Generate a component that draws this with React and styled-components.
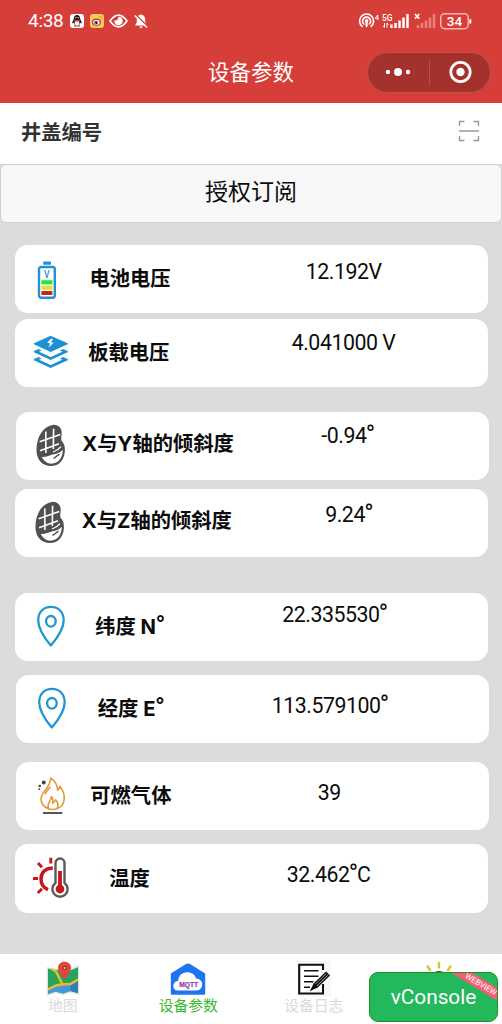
import React, { useState } from "react";
import styled, { createGlobalStyle } from "styled-components";

const GlobalStyle = createGlobalStyle`
  * {
    box-sizing: border-box;
  }

  body {
    margin: 0;
    background: #dcdcdc;
    font-family: Roboto, "Noto Sans CJK SC", sans-serif;
    color: #0c0c0c;
  }

  svg {
    display: block;
    flex: none;
  }
`;

const Page = styled.div`
  display: flex;
  flex-direction: column;
  width: 502px;
  height: 1024px;
  overflow: hidden;
  background: #dcdcdc;
`;

const Header = styled.header`
  flex: none;
  height: 102.5px;
  background: #d63e39;
  color: #fff;
`;

const StatusBar = styled.div`
  display: flex;
  align-items: center;
  justify-content: space-between;
  height: 42px;
  padding: 0 30px 0 28px;
`;

const StatusGroup = styled.div`
  display: flex;
  align-items: center;
  gap: 5.5px;
`;

const Time = styled.span`
  width: 36.5px;
  font-size: 19px;
  line-height: 22px;
  letter-spacing: -0.3px;
`;

const NavBar = styled.div`
  display: grid;
  grid-template-columns: 1fr 86px 1fr;
  align-items: center;
  height: 60px;
`;

const Title = styled.h1`
  grid-column: 2;
  margin: 0;
  padding-top: 2px;
  font-size: 21.5px;
  font-weight: 400;
  line-height: 30px;
  white-space: nowrap;
`;

const Capsule = styled.div`
  justify-self: end;
  display: flex;
  align-items: center;
  width: 124px;
  height: 41px;
  margin-right: 11px;
  border: 1px solid #c0514c;
  border-radius: 21px;
  background: #a5312d;
`;

const CapsuleButton = styled.button`
  display: flex;
  flex: 1;
  align-items: center;
  justify-content: center;
  height: 25px;
  padding: 0;
  border: 0;
  background: none;

  & + & {
    border-left: 1px solid #bd4e49;
  }
`;

const NumberRow = styled.div`
  display: flex;
  flex: none;
  align-items: center;
  justify-content: space-between;
  height: 61px;
  padding: 0 22.5px 5px 21px;
  background: #fff;
  color: #333;
  font-size: 20.3px;
  font-weight: 700;
`;

const SubscribeButton = styled.button`
  flex: none;
  height: 59px;
  padding: 0;
  border: 1px solid #cfcfcf;
  border-radius: 6px;
  background: #f8f8f8;
  color: #0c0c0c;
  font-family: inherit;
  font-size: 23px;
  line-height: 30px;
`;

const CardList = styled.main`
  display: flex;
  flex: 1;
  flex-direction: column;
  padding-top: 22px;
`;

const Card = styled.section`
  display: grid;
  grid-template-columns: 66px 160px 1fr;
  flex: none;
  width: 472.8px;
  height: ${(p) => p.$height || 68}px;
  margin: 0 0 ${(p) => p.$gap}px ${(p) => (p.$shifted ? 16.3 : 15.2)}px;
  border-radius: 13px;
  background: #fff;
`;

const CardIcon = styled.div`
  display: flex;
  align-items: center;
  padding-left: 15.8px;
`;

const CardLabel = styled.div`
  align-self: center;
  padding-left: ${(p) => p.$indent}px;
  padding-bottom: ${(p) => p.$lift || 0}px;
  font-family: Inter, "Noto Sans CJK SC", sans-serif;
  font-size: 20.3px;
  font-weight: 700;
  line-height: 28px;
  white-space: nowrap;
`;

const CardValue = styled.div`
  padding: ${(p) => p.$top}px 0 0 ${(p) => p.$indent}px;
  font-size: 21.3px;
  line-height: 24px;
  letter-spacing: -0.45px;
  white-space: nowrap;
`;

const Degree = styled.span`
  font-family: Roboto, sans-serif;
  font-size: ${(p) => (p.$bold ? 1.25 : 1.18)}em;
  font-weight: ${(p) => (p.$bold ? 700 : 400)};
  line-height: 0;
  margin-left: ${(p) => (p.$bold ? -0.5 : -0.8)}px;
  letter-spacing: -1px;
`;

const TabBar = styled.nav`
  display: grid;
  grid-template-columns: repeat(4, 1fr);
  flex: none;
  height: 70px;
  background: #fff;
`;

const Tab = styled.button`
  display: flex;
  flex-direction: column;
  align-items: center;
  padding: 6.5px 0 0;
  border: 0;
  background: none;
  color: ${(p) => (p.$active ? "#3cba2f" : "#dadada")};
  font-family: inherit;
  font-size: 14.8px;
  line-height: 20px;
`;

const DebugButton = styled.button`
  position: fixed;
  top: 972px;
  left: 369px;
  width: 129px;
  height: 50px;
  padding: 0;
  overflow: hidden;
  border: 1.5px solid #1b9226;
  border-radius: 9px;
  background: #23b85c;
  color: #fff;
  font-family: Roboto, sans-serif;
  font-size: 20.8px;
  line-height: 46px;
`;

const Ribbon = styled.span`
  position: absolute;
  top: 6px;
  left: 66px;
  width: 90px;
  height: 11px;
  background: #f45d77;
  font-size: 8px;
  line-height: 11px;
  text-align: center;
  transform: rotate(31deg);
`;

const QQIcon = () => (
  <svg width="14" height="14" viewBox="0 0 14 14">
    <rect width="14" height="14" rx="3" fill="#fff" />
    <path d="M7 1C4.7 1 3.7 2.8 3.8 5L2.2 8.6l.4 1 1.3-.8.9 2.6h4.4l.9-2.6 1.3.8.4-1L10.2 5C10.3 2.8 9.3 1 7 1Z" fill="#20191a" />
    <ellipse cx="7" cy="9" rx="2.4" ry="2.6" fill="#fff" />
    <circle cx="5.9" cy="3.6" r=".7" fill="#fff" />
    <circle cx="8.1" cy="3.6" r=".7" fill="#fff" />
    <path d="M4 5.6q3 1.4 6 0v1.3q-3 1.3-6 0Z" fill="#d73931" />
    <path d="M4.2 12.1h2.3M7.5 12.1h2.3" stroke="#c44428" strokeWidth="1.1" />
  </svg>
);

const WeiboIcon = () => (
  <svg width="14" height="14" viewBox="0 0 14 14">
    <rect width="14" height="14" rx="3" fill="#f5cb61" />
    <ellipse cx="6.4" cy="8.2" rx="4.5" ry="3.6" fill="#c93c2b" />
    <ellipse cx="6.4" cy="8.5" rx="3.2" ry="2.4" fill="#fff" />
    <circle cx="6" cy="8.7" r="1.7" fill="#201818" />
    <circle cx="5.5" cy="8.9" r=".5" fill="#fff" />
    <path d="M8.7 2.6c2.3-.3 3.5 1.4 2.9 3.3" fill="none" stroke="#f09a29" strokeWidth="1.2" />
  </svg>
);

const EyeIcon = () => (
  <svg width="19" height="14" viewBox="0 0 19 14">
    <path d="M1 7Q9.5-4.8 18 7 9.5 18.8 1 7Z" fill="none" stroke="#fff" strokeWidth="1.7" />
    <path d="M9.5 2.8A4.2 4.2 0 1 1 5.4 6.2Q8.8 7.4 9.5 2.8Z" fill="#fff" />
  </svg>
);

const MutedIcon = () => (
  <svg width="14" height="15" viewBox="0 0 14 15">
    <path d="M7 .6c-2.8.5-4.2 2.3-4.2 4.8v3.2L1 11.5h12l-1.8-2.9V5.4C11.2 2.9 9.8 1.1 7 .6ZM5 12.5h4L7 14.5Z" fill="#fff" />
    <path d="M2 1 13.8 12.7" stroke="#d63e39" strokeWidth="1.5" />
    <path d="M.7 1.5 13 13.5" stroke="#fff" strokeWidth="1.5" />
  </svg>
);

const SignalIcons = () => (
  <svg width="114" height="18" viewBox="0 0 114 18" fill="none">
    <g stroke="#fff" strokeWidth="1.6" strokeLinecap="round">
      <path d="M4.2 14.5a7 7 0 1 1 8.8 0" />
      <path d="M5.8 12a4 4 0 1 1 5.6 0" />
      <path d="M8.6 9v5" strokeWidth="2.2" />
    </g>
    <circle cx="8.6" cy="8.7" r="1.8" fill="#fff" />
    <g fill="#fff" fontFamily="Roboto" fontWeight="500">
      <text x="16.8" y="7.5" fontSize="7.5">4</text>
      <text x="24" y="8.5" fontSize="9" textLength="10.5" lengthAdjust="spacingAndGlyphs">5G</text>
    </g>
    <path d="M26.5 11v4.5l-1.4-1.5M29 15.5V11l1.4 1.5" stroke="#fff" />
    <path d="M33.5 12.5v3.5M37.5 11v5M41.5 8.5v7.5M45.5 5.5v10.5M49.5 2v14" stroke="#fff" strokeWidth="2.5" />
    <path d="m57 2 4.3 4.6m0-4.6-4.3 4.6" stroke="#fff" strokeWidth="1.7" />
    <path d="M60 13v3M64 11v5M68 8.5v7.5M72 5.5v10.5M76 2v14" stroke="#e8827e" strokeWidth="2.5" />
    <rect x="82.7" y="1.7" width="27.5" height="15" rx="4" stroke="#f4b6b3" strokeWidth="1.5" />
    <path d="M112.3 7.3v4.2" stroke="#fff" strokeWidth="2" />
    <text x="96.5" y="14" fill="#fff" fontFamily="Roboto" fontSize="13.5" fontWeight="500" textAnchor="middle">34</text>
  </svg>
);

const ScanIcon = () => (
  <svg width="22" height="22" viewBox="0 0 22 22" fill="none" stroke="#999" strokeWidth="1.4">
    <path d="M1.5 6V1.5h5M15.5 1.5h5V6M20.5 16v4.5h-5M6.5 20.5h-5V16M1 11h20" />
  </svg>
);

const BatteryIcon = () => (
  <svg width="40" height="44" viewBox="0 0 40 44">
    <rect x="12.2" y="4.5" width="7.8" height="3.2" rx=".6" fill="#2292d0" />
    <rect x="8" y="10" width="15.8" height="30.7" rx="2.2" fill="#fff" stroke="#2292d0" strokeWidth="2.4" />
    <text x="15.9" y="21.2" textAnchor="middle" fill="#2292d0" fontFamily="Roboto" fontWeight="500" fontSize="10" textLength="5.6" lengthAdjust="spacingAndGlyphs">V</text>
    <path d="M10.4 23.2h11v4.2h-11z" fill="#23e83b" />
    <path d="M10.4 28.7h11v4h-11z" fill="#e9da3b" />
    <path d="M10.4 34h11v4h-11z" fill="#cb2411" />
  </svg>
);

const LayersIcon = () => (
  <svg width="40" height="44" viewBox="0 0 40 44" fill="#1c91d3">
    <path d="M19.7 4.8 36.7 12.3v1L19.7 20.9 2.9 13.3v-1Z" />
    <path d="m20.5 7.6-4.3 4 2.9.9-1.7 4.2 5.2-5-3-.8 2.4-2.5Z" fill="#fff" />
    <path d="m2.9 20 4.6-2 3 1.4-2.4 1.3 11.6 5.2 11.6-5.2-2.4-1.3 3-1.4 4.8 2v1.2l-17 7.9-16.8-7.9Z" />
    <path d="m2.9 28 4.6-2 3 1.4-2.4 1.3 11.6 5.2 11.6-5.2-2.4-1.3 3-1.4 4.8 2v1.2l-17 7.9-16.8-7.9Z" />
  </svg>
);

const ManholeIcon = () => (
  <svg width="40" height="44" viewBox="0 0 40 44">
    <path d="M20.8.9c4.7-.6 8.6 2.7 8.9 7.1.1 3.9-.9 6.1-.2 8.7 2.5 2.3 3.5 5.5 3.4 9.5C32.7 36 27 42 19 42 10 42 4.5 35.5 4.5 26 4.5 13.5 10.5 2.5 20.8.9Z" fill="#505050" />
    <path d="M9.7 33c4.6.3 8-1.5 10.9-2.5l4.5-1.1c2.3-.5 4-1.9 5.6-3.6C31 33 26.6 39.7 19.5 39.7c-4.2 0-7.5-2.7-9.8-6.7Z" fill="#fff" />
    <path d="M13.8 7.5 13.9 29M21.6 4.8 21.3 25M7.6 17.7l20.7-7.2M8 26.8l19-7" stroke="#fff" strokeWidth="1.6" fill="none" />
    <path d="m21 29 6.3-4.2M21.5 34.5l6-4.3" stroke="#505050" strokeWidth="1.5" />
    <path d="M21 28q5-1.5 8-5.3" stroke="#fff" strokeWidth="1.3" fill="none" />
  </svg>
);

const PinIcon = () => (
  <svg width="40" height="44" viewBox="0 0 40 44" fill="none" stroke="#2196d0" strokeWidth="2.3">
    <path d="M19.8 40.5Q7.2 25.5 7.2 15.2C7.2 7.1 12.5 1.8 19.9 1.8s12.8 5.3 12.8 13.4Q32.7 25.5 19.8 40.5Z" strokeLinejoin="round" />
    <ellipse cx="19.9" cy="16.3" rx="4.8" ry="5.3" />
  </svg>
);

const FlameIcon = () => (
  <svg width="40" height="44" viewBox="0 0 40 44" fill="none">
    <g stroke="#e39a3b" strokeWidth="1.6" strokeLinejoin="round">
      <path d="M16.3 34.8c-4.6-1.9-7.5-5.5-7.2-10.5.4-6.9 8.7-9.3 9.7-20.2 4.1 2.9 7 7 6.7 12.3 1.6-.8 2.3-2.2 2.4-4.1 3.3 4.2 4.7 8.4 4.3 13-.4 4.7-3 7.9-7.3 9.5 2.1-3.3 1.1-6.3-1.2-9-1.3 2.5-3.1 3.6-3.2 3.4.8-2.7.5-5.2-1.1-6.7.2 4.6-5.2 6.3-3.1 12.3Z" />
      <path d="M13.1 20.5c.4-2.6 2.5-4.3 5.5-7.8" />
      <path d="M16.3 34.8q4.5 1.5 8.6 0" />
    </g>
    <circle cx="11.7" cy="8.6" r="2" fill="#444" />
    <circle cx="7.7" cy="12" r="1.3" fill="#444" />
    <circle cx="7.3" cy="15.2" r=".9" fill="#444" />
    <path d="M11 39h19.3" stroke="#555" strokeWidth="2" />
  </svg>
);

const TemperatureIcon = () => (
  <svg width="40" height="44" viewBox="0 0 40 44" fill="none">
    <path d="M21.8 11.2C14.5 10.6 10 15.8 10 22c0 5 2.4 8.7 7 10.6" stroke="#c4161c" strokeWidth="3.5" />
    <path d="M19.8 .8v5.8M7 6l4 4.3M2 21.5h5M6.8 36l4.2-4.3" stroke="#c4161c" strokeWidth="2.9" />
    <path d="M24.5 26V6a4.5 4.5 0 0 1 9 0v20a7.6 7.6 0 1 1-9 0Z" fill="#fff" stroke="#5a5a5a" strokeWidth="2.4" />
    <path d="M29 14v17" stroke="#c4161c" strokeWidth="3.8" />
    <circle cx="29" cy="32" r="4.4" fill="#c4161c" />
  </svg>
);

const MapIcon = () => (
  <svg width="34" height="35" viewBox="0 0 34 35">
    <path d="m.8 6 8.7 2L17 6l7.5 2L33.2 4v30l-8.7-2.5L17 34l-7.5-2L.8 35Z" fill="#dde4df" />
    <path d="m2 7.5 7.5 2L17 7.5l7.5 2 7.5-3.3V32l-7.5-2-7.5 2.5-7.5-2L2 33Z" fill="#26a45e" />
    <path d="m2 28.5 7.5-3.5L17 23.5h7.5l7.5-4V32l-7.5-2-7.5 2.5-7.5-2L2 33Z" fill="#4298d8" />
    <path d="m24.5 23.5 7.5-4V32l-7.5-2Z" fill="#2f7fbd" />
    <path d="m5.5 8 4.5 2.5 5.5 11 .7 2M2 28.3 10 24.5l7-1.3 7.5-.2 7.5-4.5" fill="none" stroke="#efbb24" strokeWidth="2.4" />
    <path d="M18.5 18.5Q12 10.5 12 6.8C12 3 15 .8 18.6.8s6.5 2.4 6.5 6Q25.1 10.5 18.5 18.5Z" fill="#e44538" />
    <circle cx="18.6" cy="6.9" r="2.1" fill="#84352b" />
    <circle cx="18.6" cy="6.9" r="1" fill="#bfd7c8" />
  </svg>
);

const MqttIcon = () => (
  <svg width="36" height="35" viewBox="0 0 36 35">
    <path d="M.8 12.5 16 3q2-1 4 0l15.2 9.5v20.2q0 1-1 1H1.8q-1 0-1-1Z" fill="#2174ef" />
    <path d="M8 29.5c-6.3 0-6.3-9 .2-9.8C8.7 9 24 8.7 26 17.5c8.3.1 8.3 12 0 12Z" fill="#fff" />
    <text x="18.7" y="26.2" textAnchor="middle" fill="#993cae" stroke="#993cae" strokeWidth=".25" fontFamily="Liberation Sans" fontWeight="700" fontSize="7" textLength="19" lengthAdjust="spacingAndGlyphs">MQTT</text>
  </svg>
);

const LogIcon = () => (
  <svg width="34" height="35" viewBox="0 0 34 35" fill="none" stroke="#111">
    <path d="M0 0h34v35H0z" fill="#f7f7f7" stroke="none" />
    <path d="M26 9V3.7H2.2v28.8H26V23" strokeWidth="2.1" fill="#fff" />
    <path d="M7 9.7h14.5M7 15.2h14.5M7 20.8h9.5M7 26.2h6" strokeWidth="1.5" />
    <path d="m15 28 2.2-5L29 11.5l3 3L20 26Z" fill="#fff" strokeWidth="1.5" />
    <path d="m18.5 24.5 12-11.5M15 28l2.6-4.5 1.8 2Z" strokeWidth="1.8" fill="#111" />
  </svg>
);

const LampIcon = () => (
  <svg width="34" height="35" viewBox="0 0 34 35" fill="none">
    <path d="M17 1v6.5M5 4.5l3.5 5.5M29 4.5 25.5 10" stroke="#d8c72e" strokeWidth="2.4" />
    <circle cx="17" cy="18.5" r="7.5" fill="#fff" stroke="#444" strokeWidth="2" />
  </svg>
);

const readings = [
  { icon: BatteryIcon, label: "电池电压", value: "12.192V", labelX: 8.3, valueX: 64.5, top: 15, gap: 6.5 },
  { icon: LayersIcon, label: "板载电压", value: "4.041000 V", labelX: 7, valueX: 50.5, top: 11.5, gap: 25 },
  { icon: ManholeIcon, label: "X与Y轴的倾斜度", value: "-0.94°", labelX: 0, valueX: 79, top: 11.5, lift: 5, gap: 9, shifted: true },
  { icon: ManholeIcon, label: "X与Z轴的倾斜度", value: "9.24°", labelX: 0.5, valueX: 84, top: 13.5, lift: 5, gap: 36 },
  { icon: PinIcon, label: "纬度 N°", value: "22.335530°", labelX: 14, valueX: 41, top: 10, gap: 14 },
  { icon: PinIcon, label: "经度 E°", value: "113.579100°", labelX: 15.5, valueX: 29.5, top: 18.5, gap: 19, shifted: true },
  { icon: FlameIcon, label: "可燃气体", value: "39", labelX: 8, valueX: 75.5, top: 18.5, gap: 14, shifted: true },
  { icon: TemperatureIcon, label: "温度", value: "32.462°C", labelX: 28, valueX: 45.5, top: 19, gap: 0, height: 69 },
];

const tabs = [
  { icon: MapIcon, label: "地图" },
  { icon: MqttIcon, label: "设备参数" },
  { icon: LogIcon, label: "设备日志" },
  { icon: LampIcon, label: "" },
];

// the degree ring is set larger than the text around it
function withDegree(text, bold) {
  const [before, after] = text.split("°");
  if (after === undefined) return text;
  return (
    <>
      {before}
      <Degree $bold={bold}>°</Degree>
      {after}
    </>
  );
}

function App() {
  const [activeTab, setActiveTab] = useState(1);

  return (
    <Page>
      <GlobalStyle />
      <Header>
        <StatusBar>
          <StatusGroup>
            <Time>4:38</Time>
            <QQIcon />
            <WeiboIcon />
            <EyeIcon />
            <MutedIcon />
          </StatusGroup>
          <SignalIcons />
        </StatusBar>
        <NavBar>
          <Title>设备参数</Title>
          <Capsule>
            <CapsuleButton>
              <svg width="26" height="10" viewBox="0 0 26 10" fill="#fff">
                <circle cx="3" cy="5" r="2.2" />
                <circle cx="13" cy="5" r="4" />
                <circle cx="23" cy="5" r="2.2" />
              </svg>
            </CapsuleButton>
            <CapsuleButton>
              <svg width="24" height="24" viewBox="0 0 24 24" fill="#fff">
                <circle cx="12.5" cy="12" r="9.7" fill="none" stroke="#fff" strokeWidth="2.8" />
                <circle cx="12.5" cy="12" r="4.2" />
              </svg>
            </CapsuleButton>
          </Capsule>
        </NavBar>
      </Header>

      <NumberRow>
        井盖编号
        <ScanIcon />
      </NumberRow>
      <SubscribeButton>授权订阅</SubscribeButton>

      <CardList>
        {readings.map((item) => (
          <Card key={item.label} $gap={item.gap} $shifted={item.shifted} $height={item.height}>
            <CardIcon>
              <item.icon />
            </CardIcon>
            <CardLabel $indent={item.labelX} $lift={item.lift}>
              {withDegree(item.label, true)}
            </CardLabel>
            <CardValue $indent={item.valueX} $top={item.top}>
              {withDegree(item.value)}
            </CardValue>
          </Card>
        ))}
      </CardList>

      <TabBar>
        {tabs.map((tab, i) => (
          <Tab key={i} $active={i === activeTab} onClick={() => setActiveTab(i)}>
            <tab.icon />
            {tab.label}
          </Tab>
        ))}
      </TabBar>

      <DebugButton>
        vConsole
        <Ribbon>WEBVIEW</Ribbon>
      </DebugButton>
    </Page>
  );
}

export default App;
